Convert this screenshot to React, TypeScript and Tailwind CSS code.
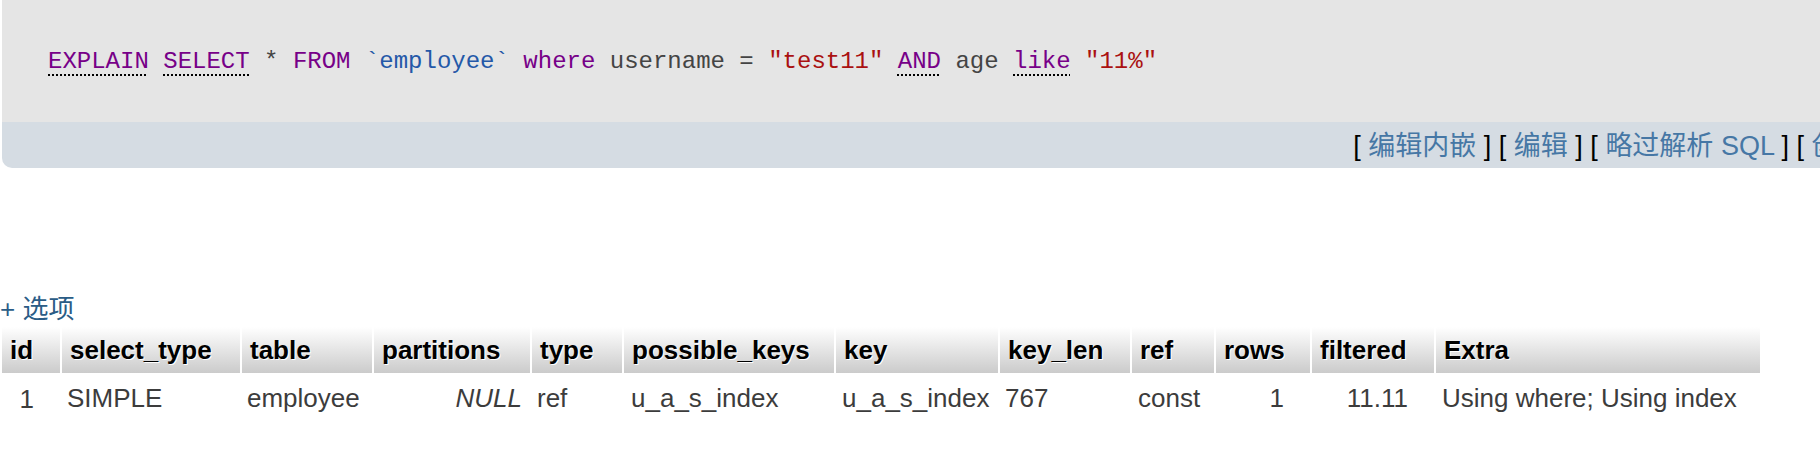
import React from 'react';

const kw = 'text-[#770088]';
const kwLink = 'text-[#770088] underline decoration-dotted decoration-black decoration-2 underline-offset-[6px]';
const link = 'text-[#4677a5]';

const headers = [
  { name: 'id', w: 'w-[58px]' },
  { name: 'select_type', w: 'w-[178px]' },
  { name: 'table', w: 'w-[130px]' },
  { name: 'partitions', w: 'w-[156px]' },
  { name: 'type', w: 'w-[90px]' },
  { name: 'possible_keys', w: 'w-[210px]' },
  { name: 'key', w: 'w-[162px]' },
  { name: 'key_len', w: 'w-[130px]' },
  { name: 'ref', w: 'w-[82px]' },
  { name: 'rows', w: 'w-[94px]' },
  { name: 'filtered', w: 'w-[122px]' },
  { name: 'Extra', w: 'w-[324px]' },
];

function SqlBox() {
  return (
    <div className="ml-[2px] w-[2102px] overflow-hidden rounded-b-[10px]">
      <div className="h-[122px] bg-[#e5e5e5] pl-[46px] pt-[48px]">
        <code className="whitespace-pre font-['Liberation_Mono',monospace] text-[24px] leading-[28px] text-[#444]">
          <span className={kwLink}>EXPLAIN</span> <span className={kwLink}>SELECT</span> *{' '}
          <span className={kw}>FROM</span> <span className="text-[#2458a8]">`employee`</span>{' '}
          <span className={kw}>where</span> username = <span className="text-[#aa1111]">"test11"</span>{' '}
          <span className={kwLink}>AND</span> age <span className={kwLink}>like</span>{' '}
          <span className="text-[#aa1111]">"11%"</span>
        </code>
      </div>
      <div className="h-[46px] bg-[#d5dce3] pr-2 text-right text-[27px] leading-[48px] text-black whitespace-pre">
        [ <a className={link}>编辑内嵌</a> ] [ <a className={link}>编辑</a> ] [ <a className={link}>略过解析 SQL</a> ] [{' '}
        <a className={link}>创建 PHP 代码</a> ] [ <a className={link}>刷新</a> ]
      </div>
    </div>
  );
}

function ResultTable() {
  return (
    <div>
      <div className="h-[36px] text-[26px] leading-[36px] text-[#2a5c86]">+ 选项</div>
      <table className="table-fixed border-separate border-spacing-x-[2px] border-spacing-y-0 text-[26px] leading-[30px]">
        <thead>
          <tr>
            {headers.map((h) => (
              <th
                key={h.name}
                className={`${h.w} h-[46px] bg-linear-to-b from-white to-[#cbcbcb] px-2 text-left font-bold text-black [text-shadow:1px_1px_0_#fff]`}
              >
                {h.name}
              </th>
            ))}
          </tr>
        </thead>
        <tbody className="text-[#3c3c3c]">
          <tr>
            <td className="pt-[11px] pb-2 pr-[26px] text-right">1</td>
            <td className="pl-[5px]">SIMPLE</td>
            <td className="pl-[5px]">employee</td>
            <td className="pr-2 text-right italic">NULL</td>
            <td className="pl-[5px]">ref</td>
            <td className="pl-[7px]">u_a_s_index</td>
            <td className="pl-[6px]">u_a_s_index</td>
            <td className="pl-[5px]">767</td>
            <td className="pl-[6px]">const</td>
            <td className="pr-[26px] text-right">1</td>
            <td className="pr-[26px] text-right">11.11</td>
            <td className="pl-[6px]">Using where; Using index</td>
          </tr>
        </tbody>
      </table>
    </div>
  );
}

export default function App() {
  return (
    <div className="h-[476px] w-[1820px] overflow-hidden bg-white font-['Liberation_Sans','Noto_Sans_CJK_SC',sans-serif]">
      <SqlBox />
      <div className="mt-[123px]">
        <ResultTable />
      </div>
    </div>
  );
}
